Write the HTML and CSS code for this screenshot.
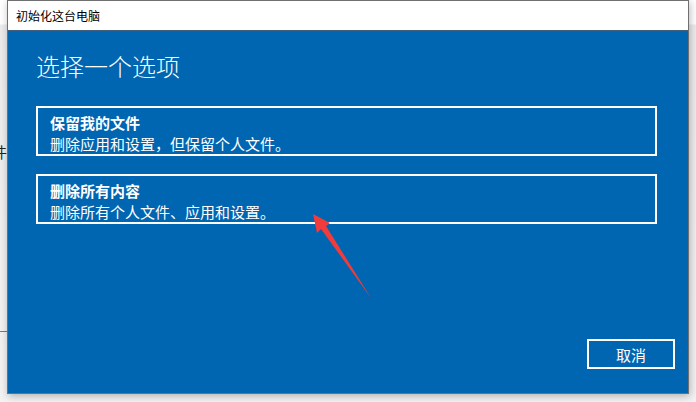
FILE: index.html
```html
<!DOCTYPE html>
<html lang="zh-CN">
<head>
<meta charset="utf-8">
<title>初始化这台电脑</title>
<link rel="stylesheet" href="styles.css">
</head>
<body>
<div class="desk">
  <div class="desk-text">件</div>
  <div class="desk-rule"></div>
</div>
<div class="window">
  <div class="titlebar">初始化这台电脑</div>
  <div class="pane">
    <h1 class="heading">选择一个选项</h1>
    <div class="options">
      <div class="option">
        <div class="option-title">保留我的文件</div>
        <div class="option-desc">删除应用和设置，但保留个人文件。</div>
      </div>
      <div class="option">
        <div class="option-title">删除所有内容</div>
        <div class="option-desc">删除所有个人文件、应用和设置。</div>
      </div>
    </div>
    <div class="footer">
      <button class="btn">取消</button>
    </div>
  </div>
</div>
<svg class="arrow" width="696" height="402" viewBox="0 0 696 402" aria-hidden="true">
  <polygon points="313,214 330,223 326,226 371,298 321,229 317,233" fill="#f23b3b"/>
</svg>
</body>
</html>
```
FILE: styles.css
```css
html, body {
  margin: 0;
  padding: 0;
}
body {
  width: 696px;
  height: 402px;
  overflow: hidden;
  background: #f2f2f2;
  font-family: "Noto Sans CJK SC", "Noto Sans", sans-serif;
  position: relative;
}
.desk {
  height: 402px;
  background: linear-gradient(#ffffff 0, #ffffff 24px, #ececec 25px, #f3f3f3 100%);
}
.desk-text {
  padding-top: 141px;
  margin-left: -8px;
  font-size: 15px;
  line-height: 21px;
  color: #222;
}
.desk-rule {
  margin-top: 169px;
  height: 1px;
  background: #7a7a7a;
  width: 10px;
}
.window {
  position: absolute;
  left: 7px;
  top: 0;
  width: 680px;
  height: 392px;
  border: 1px solid #707070;
  display: flex;
  flex-direction: column;
  box-shadow: 1px 2px 8px rgba(0, 0, 0, 0.28);
}
.titlebar {
  height: 30px;
  background: #ffffff;
  font-size: 12px;
  line-height: 30px;
  padding-left: 8px;
  color: #000;
  border-bottom: 1px solid #3f5f7f;
  box-sizing: border-box;
}
.pane {
  flex: 1;
  background: #0066b1;
  color: #fff;
  display: flex;
  flex-direction: column;
  padding: 19px 13px 24px 28px;
}
.heading {
  margin: 0;
  font-size: 24px;
  line-height: 32px;
  font-weight: 300;
}
.options {
  margin-top: 24px;
  margin-right: 18px;
  display: flex;
  flex-direction: column;
  gap: 18px;
}
.option {
  border: 2px solid #fff;
  padding: 4px 12px 0;
  box-sizing: border-box;
  height: 50px;
}
.option-title {
  font-size: 15px;
  line-height: 21px;
  font-weight: 700;
}
.option-desc {
  font-size: 15px;
  line-height: 21px;
}
.footer {
  margin-top: auto;
  display: flex;
  justify-content: flex-end;
}
.btn {
  width: 88px;
  height: 30px;
  box-sizing: border-box;
  border: 2px solid #fff;
  background: transparent;
  color: #fff;
  font-family: "Noto Sans CJK SC", "Noto Sans", sans-serif;
  font-size: 15px;
  padding: 0;
}
.arrow {
  position: absolute;
  left: 0;
  top: 0;
}
```
